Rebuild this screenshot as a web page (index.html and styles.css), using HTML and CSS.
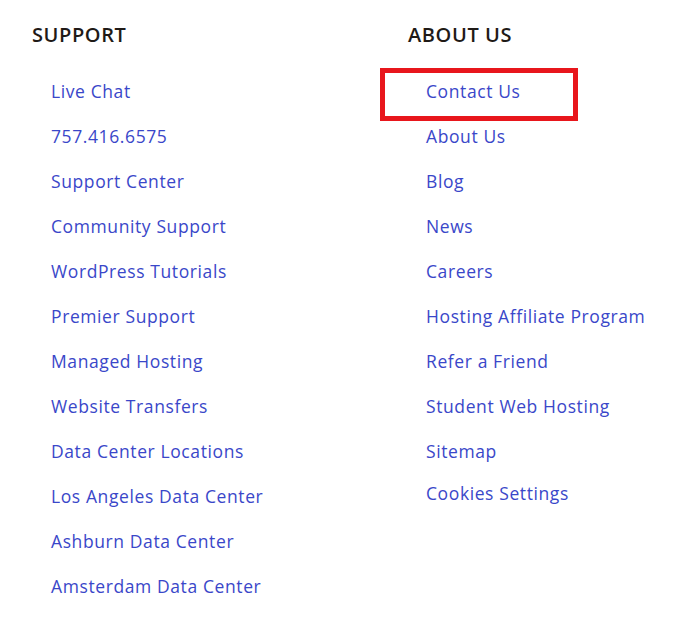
FILE: index.html
```html
<!DOCTYPE html>
<html lang="en">
<head>
    <meta charset="UTF-8">
    <meta name="viewport" content="width=device-width, initial-scale=1.0">
    <title>Footer Links</title>
    <link rel="stylesheet" href="styles.css">
</head>
<body>
    <div class="footer">
        <div class="col">
            <h3>SUPPORT</h3>
            <ul class="links">
                <li><a href="#">Live Chat</a></li>
                <li><a href="#">757.416.6575</a></li>
                <li><a href="#">Support Center</a></li>
                <li><a href="#">Community Support</a></li>
                <li><a href="#">WordPress Tutorials</a></li>
                <li><a href="#">Premier Support</a></li>
                <li><a href="#">Managed Hosting</a></li>
                <li><a href="#">Website Transfers</a></li>
                <li><a href="#">Data Center Locations</a></li>
                <li><a href="#">Los Angeles Data Center</a></li>
                <li><a href="#">Ashburn Data Center</a></li>
                <li><a href="#">Amsterdam Data Center</a></li>
            </ul>
        </div>
        <div class="col">
            <h3>ABOUT US</h3>
            <ul class="links">
                <li class="marked"><a href="#">Contact Us</a><span class="highlight"></span></li>
                <li><a href="#">About Us</a></li>
                <li><a href="#">Blog</a></li>
                <li><a href="#">News</a></li>
                <li><a href="#">Careers</a></li>
                <li><a href="#">Hosting Affiliate Program</a></li>
                <li><a href="#">Refer a Friend</a></li>
                <li><a href="#">Student Web Hosting</a></li>
                <li><a href="#">Sitemap</a></li>
                <li class="cookies"><a href="#">Cookies Settings</a></li>
            </ul>
        </div>
    </div>
</body>
</html>
```

FILE: styles.css
```css
* { margin: 0; padding: 0; box-sizing: border-box; }
body {
    font-family: 'Open Sans', 'Liberation Sans', sans-serif;
    background: #fff;
}
.footer {
    display: grid;
    grid-template-columns: 376px 1fr;
    padding: 22px 0 0 32px;
}
h3 {
    font-size: 20px;
    font-weight: 600;
    letter-spacing: 0.6px;
    color: #1f1a17;
    line-height: 26px;
    margin-bottom: 32px;
}
.links {
    list-style: none;
    padding-left: 19px;
}
.col + .col .links {
    padding-left: 18px;
}
.links li {
    height: 45px;
    line-height: 22px;
    position: relative;
}
.links a {
    font-size: 17.5px;
    color: #3a47c9;
    text-decoration: none;
    letter-spacing: 0.6px;
}
.links li.cookies {
    margin-top: -3px;
}
.highlight {
    position: absolute;
    left: -46px;
    top: -12px;
    width: 198px;
    height: 53px;
    border: 5px solid #e8161c;
}
```
